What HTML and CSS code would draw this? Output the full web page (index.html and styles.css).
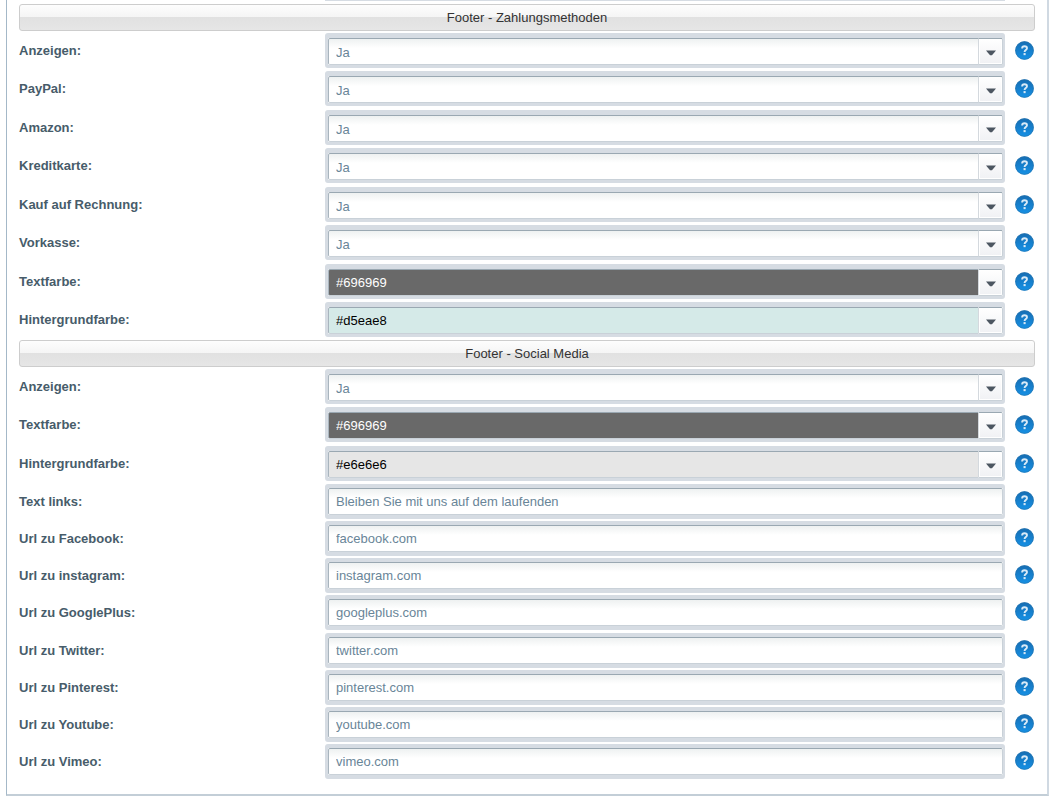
FILE: index.html
```html
<!DOCTYPE html>
<html lang="de">
<head>
<meta charset="utf-8">
<title>Footer</title>
<link rel="stylesheet" href="styles.css">
</head>
<body>
<svg class="defs" aria-hidden="true">
  <defs>
    <linearGradient id="blue" x1="0" y1="0" x2="0" y2="1"><stop offset="0" stop-color="#166db3"/><stop offset="1" stop-color="#1591e6"/></linearGradient>
    <symbol id="help" viewBox="0 0 20 20"><circle cx="10" cy="10" r="9.800" fill="url(#blue)"/><circle cx="10" cy="10" r="9.300" fill="none" stroke="#2a76ae" stroke-width="1" opacity=".7"/><path d="M7.500 7.900C7.500 5.900 8.600 5.600 10 5.600c1.600 0 2.600.7 2.600 2 0 1.900-2.500 1.900-2.500 3.900" fill="none" stroke="#d9eaf7" stroke-width="2"/><path d="M9 12.700h2.200v2.200H9z" fill="#d9eaf7"/></symbol>
    <symbol id="arrow" viewBox="0 0 10 6"><path d="M0 .5h10L6 5.300H4z" fill="#4c5661"/></symbol>
  </defs>
</svg>
<form class="panel">
  <div class="previous"><span></span></div>
  <section class="group">
    <h2>Footer - Zahlungsmethoden</h2>
    <div class="rows">
      <div class="row"><label for="p1">Anzeigen:</label><div class="field"><select id="p1"><option>Ja</option><option>Nein</option></select><span class="trigger over"><svg><use href="#arrow"/></svg></span></div><button type="button" class="help" aria-label="Hilfe"><svg><use href="#help"/></svg></button></div>
      <div class="row"><label for="p2">PayPal:</label><div class="field"><select id="p2"><option>Ja</option><option>Nein</option></select><span class="trigger over"><svg><use href="#arrow"/></svg></span></div><button type="button" class="help" aria-label="Hilfe"><svg><use href="#help"/></svg></button></div>
      <div class="row"><label for="p3">Amazon:</label><div class="field"><select id="p3"><option>Ja</option><option>Nein</option></select><span class="trigger over"><svg><use href="#arrow"/></svg></span></div><button type="button" class="help" aria-label="Hilfe"><svg><use href="#help"/></svg></button></div>
      <div class="row"><label for="p4">Kreditkarte:</label><div class="field"><select id="p4"><option>Ja</option><option>Nein</option></select><span class="trigger over"><svg><use href="#arrow"/></svg></span></div><button type="button" class="help" aria-label="Hilfe"><svg><use href="#help"/></svg></button></div>
      <div class="row"><label for="p5">Kauf auf Rechnung:</label><div class="field"><select id="p5"><option>Ja</option><option>Nein</option></select><span class="trigger over"><svg><use href="#arrow"/></svg></span></div><button type="button" class="help" aria-label="Hilfe"><svg><use href="#help"/></svg></button></div>
      <div class="row"><label for="p6">Vorkasse:</label><div class="field"><select id="p6"><option>Ja</option><option>Nein</option></select><span class="trigger over"><svg><use href="#arrow"/></svg></span></div><button type="button" class="help" aria-label="Hilfe"><svg><use href="#help"/></svg></button></div>
      <div class="row"><label for="p7">Textfarbe:</label><div class="field"><input class="color dark" id="p7" type="text" value="#696969"><button type="button" class="trigger" aria-label="Farbe wählen"><svg><use href="#arrow"/></svg></button></div><button type="button" class="help" aria-label="Hilfe"><svg><use href="#help"/></svg></button></div>
      <div class="row"><label for="p8">Hintergrundfarbe:</label><div class="field"><input class="color mint" id="p8" type="text" value="#d5eae8"><button type="button" class="trigger" aria-label="Farbe wählen"><svg><use href="#arrow"/></svg></button></div><button type="button" class="help" aria-label="Hilfe"><svg><use href="#help"/></svg></button></div>
    </div>
  </section>
  <section class="group">
    <h2>Footer - Social Media</h2>
    <div class="rows">
      <div class="row"><label for="s1">Anzeigen:</label><div class="field"><select id="s1"><option>Ja</option><option>Nein</option></select><span class="trigger over"><svg><use href="#arrow"/></svg></span></div><button type="button" class="help" aria-label="Hilfe"><svg><use href="#help"/></svg></button></div>
      <div class="row"><label for="s2">Textfarbe:</label><div class="field"><input class="color dark" id="s2" type="text" value="#696969"><button type="button" class="trigger" aria-label="Farbe wählen"><svg><use href="#arrow"/></svg></button></div><button type="button" class="help" aria-label="Hilfe"><svg><use href="#help"/></svg></button></div>
      <div class="row"><label for="s3">Hintergrundfarbe:</label><div class="field"><input class="color grey" id="s3" type="text" value="#e6e6e6"><button type="button" class="trigger" aria-label="Farbe wählen"><svg><use href="#arrow"/></svg></button></div><button type="button" class="help" aria-label="Hilfe"><svg><use href="#help"/></svg></button></div>
    </div>
    <div class="rows text">
      <div class="row"><label for="t1">Text links:</label><div class="field"><input id="t1" type="text" value="Bleiben Sie mit uns auf dem laufenden"></div><button type="button" class="help" aria-label="Hilfe"><svg><use href="#help"/></svg></button></div>
      <div class="row"><label for="t2">Url zu Facebook:</label><div class="field"><input id="t2" type="text" value="facebook.com"></div><button type="button" class="help" aria-label="Hilfe"><svg><use href="#help"/></svg></button></div>
      <div class="row"><label for="t3">Url zu instagram:</label><div class="field"><input id="t3" type="text" value="instagram.com"></div><button type="button" class="help" aria-label="Hilfe"><svg><use href="#help"/></svg></button></div>
      <div class="row"><label for="t4">Url zu GooglePlus:</label><div class="field"><input id="t4" type="text" value="googleplus.com"></div><button type="button" class="help" aria-label="Hilfe"><svg><use href="#help"/></svg></button></div>
      <div class="row"><label for="t5">Url zu Twitter:</label><div class="field"><input id="t5" type="text" value="twitter.com"></div><button type="button" class="help" aria-label="Hilfe"><svg><use href="#help"/></svg></button></div>
      <div class="row"><label for="t6">Url zu Pinterest:</label><div class="field"><input id="t6" type="text" value="pinterest.com"></div><button type="button" class="help" aria-label="Hilfe"><svg><use href="#help"/></svg></button></div>
      <div class="row"><label for="t7">Url zu Youtube:</label><div class="field"><input id="t7" type="text" value="youtube.com"></div><button type="button" class="help" aria-label="Hilfe"><svg><use href="#help"/></svg></button></div>
      <div class="row"><label for="t8">Url zu Vimeo:</label><div class="field"><input id="t8" type="text" value="vimeo.com"></div><button type="button" class="help" aria-label="Hilfe"><svg><use href="#help"/></svg></button></div>
    </div>
  </section>
</form>
</body>
</html>
```

FILE: styles.css
```css
* { box-sizing: border-box; }

body {
  margin: 0;
  background: #fff;
  font: 13px/16px "Liberation Sans", Arial, sans-serif;
  color: #475c6a;
}

.defs { position: absolute; width: 0; height: 0; }

.panel {
  margin: 0 5px 0 6px;
  padding: 0 12px 12px;
  border: 1px solid #a4b8c8;
  border-top: 0;
  border-right: 2px solid #d0d9e2;
  border-bottom: 2px solid #c3ced7;
}

/* Lower edge of the field above the first heading */
.previous { display: grid; grid-template-columns: 306px 1fr 30px; padding-bottom: 3px; }
.previous span { grid-column: 2; height: 1px; background: #d6dce3; }

h2 {
  margin: 0 0 2px;
  padding: 5px 0 4px;
  border: 1px solid #cdcdcd;
  border-radius: 3px;
  background: linear-gradient(#fdfdfd, #f5f5f5 48%, #e1e1e1 50%, #e6e6e6);
  color: #333;
  font-size: 13px;
  font-weight: normal;
  line-height: 16px;
  text-align: center;
}

.row {
  display: grid;
  grid-template-columns: 306px minmax(0, 1fr) 20px;
  align-items: start;
  padding-bottom: 3px;
}
.row:nth-child(even) { padding-bottom: 4px; }
.row:last-child { padding-bottom: 3px; }
.text .row { padding-bottom: 2px; }
.text .row:nth-child(4n) { padding-bottom: 3px; }

.row label { padding-top: 10px; font-weight: bold; }

.field {
  position: relative;
  display: flex;
  margin-right: 10px;
  border: 3px solid #d6dce3;
  border-top-width: 5px;
  border-right-width: 2px;
  border-radius: 3px;
  background: #fff;
}
.text .field { border-top-width: 4px; border-bottom-width: 4px; }

.field input,
.field select {
  flex: 1;
  min-width: 0;
  height: 27px;
  margin: 0;
  padding: 0 7px;
  border: 1px solid #c9d1d8;
  border-top-color: #9aa8b2;
  border-left-color: #a9b5be;
  border-radius: 2px;
  background: linear-gradient(#eef1f1, #fff 9px);
  color: #698598;
  font: inherit;
  appearance: none;
}
.field select { padding-top: 2px; }

.field .color { border-right: 0; border-radius: 2px 0 0 2px; }
.field .dark { background: #696969; color: #fff; }
.field .mint { background: #d5eae8; color: #000; }
.field .grey { background: #e6e6e6; color: #000; }

.trigger {
  display: flex;
  flex: none;
  align-items: center;
  justify-content: center;
  width: 25px;
  height: 27px;
  padding: 3px 0 0;
  border: 1px solid #c9d1d8;
  border-top-color: #9aa8b2;
  border-left-color: #d4d9de;
  border-radius: 0 2px 2px 0;
  background: linear-gradient(#fff, #f0f1f4);
  box-shadow: inset 0 0 0 1px #fff;
}
.trigger.over { position: absolute; top: 0; right: 0; pointer-events: none; }
.trigger svg { width: 10px; height: 6px; }

.help {
  width: 20px;
  height: 20px;
  margin-top: 7px;
  padding: 0;
  border: 0;
  background: none;
}
.text .help { margin-top: 6px; }
.help svg { display: block; width: 19px; height: 19px; }
```
